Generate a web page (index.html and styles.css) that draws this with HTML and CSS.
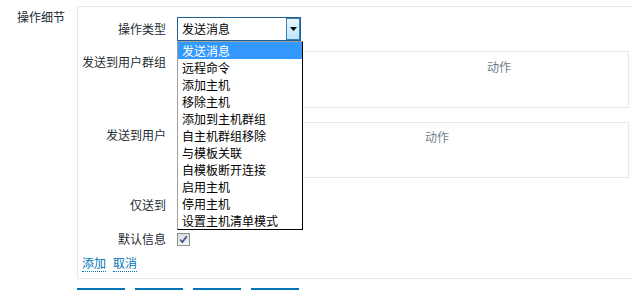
FILE: index.html
```html
<!DOCTYPE html>
<html lang="zh-CN">
<head>
<meta charset="utf-8">
<title>操作细节</title>
<link rel="stylesheet" href="styles.css">
</head>
<body>
<div class="page">
  <div class="section">
    <div class="section-label">操作细节</div>
    <div class="box">
      <div class="row row-type">
        <div class="lbl lbl-type">操作类型</div>
        <div class="field field-select">
          <div class="select">
            <span class="select-text">发送消息</span>
            <span class="select-btn">
              <svg width="7" height="4" viewBox="0 0 7 4"><path d="M0 0H7L3.5 4Z" fill="#000"/></svg>
            </span>
          </div>
          <ul class="dropdown">
            <li class="selected">发送消息</li>
            <li>远程命令</li>
            <li>添加主机</li>
            <li>移除主机</li>
            <li>添加到主机群组</li>
            <li>自主机群组移除</li>
            <li>与模板关联</li>
            <li>自模板断开连接</li>
            <li>启用主机</li>
            <li>停用主机</li>
            <li>设置主机清单模式</li>
          </ul>
        </div>
      </div>

      <div class="row row-groups">
        <div class="lbl lbl-groups">发送到用户群组</div>
        <div class="field">
          <div class="tbl tbl-groups">
            <div class="tbl-head">
              <span class="th-first th-first-g"></span>
              <span class="th">动作</span>
            </div>
          </div>
        </div>
      </div>

      <div class="row row-users">
        <div class="lbl lbl-users">发送到用户</div>
        <div class="field">
          <div class="tbl tbl-users">
            <div class="tbl-head">
              <span class="th-first th-first-u"></span>
              <span class="th">动作</span>
            </div>
          </div>
        </div>
      </div>

      <div class="row row-only">
        <div class="lbl">仅送到</div>
        <div class="field"></div>
      </div>

      <div class="row row-default">
        <div class="lbl">默认信息</div>
        <div class="field">
          <span class="checkbox">
            <svg width="11" height="11" viewBox="0 0 11 11"><path d="M2.2 5.6L4.3 8.3L8.8 2.2" fill="none" stroke="#3b4f8f" stroke-width="1.6"/></svg>
          </span>
        </div>
      </div>

      <div class="links">
        <span class="link">添加</span>
        <span class="link">取消</span>
      </div>
    </div>
  </div>

  <div class="buttons">
    <span class="btn"></span>
    <span class="btn"></span>
    <span class="btn"></span>
    <span class="btn"></span>
  </div>
</div>
</body>
</html>
```

FILE: styles.css
```css
* { box-sizing: border-box; }

html, body {
  margin: 0;
  padding: 0;
  background: #ffffff;
}

body {
  font-family: "Noto Sans CJK SC", "Noto Sans", sans-serif;
  font-size: 12px;
  color: #1f2c33;
  overflow: hidden;
}

.page {
  padding-top: 6px;
  width: 632px;
  height: 290px;
  overflow: hidden;
}

.section {
  display: flex;
  align-items: flex-start;
}

.section-label {
  width: 77px;
  padding-right: 12px;
  padding-top: 3px;
  text-align: right;
  line-height: 16px;
}

.box {
  flex: 1;
  border-top: 1px solid #e8e8e8;
  border-left: 1px solid #e8e8e8;
  border-bottom: 1px solid #e8e8e8;
  padding-top: 10px;
  padding-bottom: 6px;
}

.row {
  display: flex;
  align-items: flex-start;
}

.lbl {
  width: 88px;
  text-align: right;
  line-height: 16px;
  flex-shrink: 0;
  margin-right: 11px;
}

.field {
  position: relative;
}

.lbl-type { line-height: 24px; }

.row-groups { margin-top: 10px; }
.lbl-groups { padding-top: 3px; }

.row-users { margin-top: 14px; }
.lbl-users { padding-top: 5px; }

.row-only { margin-top: 17px; }
.row-only .lbl { line-height: 20px; }
.row-only .field { height: 20px; }

.row-default { margin-top: 14px; }
.row-default .lbl { line-height: 20px; }
.row-default .field { padding-top: 4px; }

/* select */
.field-select { z-index: 5; }

.select {
  width: 124px;
  height: 24px;
  border: 1px solid #1e5f94;
  display: flex;
  align-items: stretch;
  background: #fff;
}

.select-text {
  flex: 1;
  padding-left: 4px;
  line-height: 22px;
  color: #000;
}

.select-btn {
  width: 14px;
  border: 1px solid #3c7fb1;
  background: linear-gradient(#eaf6fd, #bee6fd);
  display: flex;
  align-items: center;
  justify-content: center;
}

.select-btn svg { display: block; }

.dropdown {
  position: absolute;
  left: 0;
  top: 24px;
  width: 126px;
  margin: 0;
  padding: 0;
  list-style: none;
  background: #fff;
  border-left: 1px solid #a0a0a0;
  border-right: 1px solid #000;
  border-bottom: 1px solid #000;
  border-top: 1px solid #a0a0a0;
}

.dropdown li {
  height: 17px;
  line-height: 17px;
  padding-left: 4px;
  color: #000;
  white-space: nowrap;
}

.dropdown li.selected {
  background: #3399ff;
  color: #fff;
}

/* tables */
.tbl {
  width: 452px;
  border: 1px solid #e8e8e8;
}

.tbl-groups { height: 57px; }
.tbl-users { height: 56px; }

.tbl-head {
  display: flex;
  line-height: 16px;
  padding-top: 7px;
}

.tbl-users .tbl-head { padding-top: 6px; }

.th {
  color: #6e7f8a;
  padding-left: 5px;
}

.th-first { display: block; flex-shrink: 0; }
.th-first-g { width: 304px; }
.th-first-u { width: 242px; }

/* checkbox */
.checkbox {
  display: flex;
  align-items: center;
  justify-content: center;
  width: 13px;
  height: 13px;
  border: 1px solid #8e8f8f;
  background: linear-gradient(#dcdcdc, #f6f6f6);
}

.checkbox svg { display: block; }

/* links */
.links {
  margin-top: 6px;
  padding-left: 4px;
  display: flex;
  gap: 7px;
  line-height: 16px;
}

.link {
  color: #0275b8;
  border-bottom: 1px dotted #0275b8;
}

/* buttons */
.buttons {
  margin-top: 9px;
  padding-left: 77px;
  display: flex;
  gap: 10px;
}

.btn {
  display: block;
  width: 48px;
  height: 25px;
  background: #0275b8;
}
```
